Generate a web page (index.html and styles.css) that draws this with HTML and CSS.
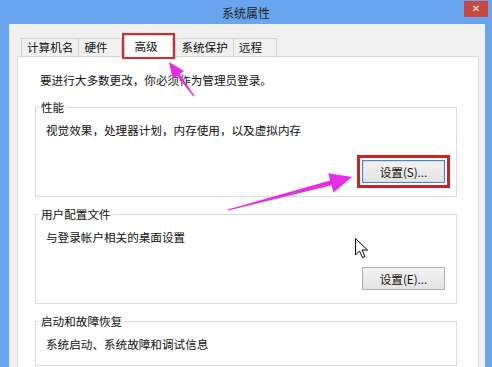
FILE: index.html
```html
<!DOCTYPE html>
<html lang="zh-CN">
<head>
<meta charset="utf-8">
<title>系统属性</title>
<link rel="stylesheet" href="styles.css">
</head>
<body>
<div class="window">
  <header class="titlebar">
    <span></span>
    <span class="title">系统属性</span>
    <span class="close">✕</span>
  </header>
  <div class="panel">
    <nav class="tabs">
      <span class="tab">计算机名</span>
      <span class="tab">硬件</span>
      <span class="tab active">高级</span>
      <span class="tab">系统保护</span>
      <span class="tab">远程</span>
    </nav>
    <section class="pane">
      <p class="intro">要进行大多数更改，你必须作为管理员登录。</p>
      <fieldset class="group">
        <legend>性能</legend>
        <p>视觉效果，处理器计划，内存使用，以及虚拟内存</p>
        <div class="actions"><button class="btn btn-default">设置(S)...</button></div>
      </fieldset>
      <fieldset class="group">
        <legend>用户配置文件</legend>
        <p>与登录帐户相关的桌面设置</p>
        <div class="actions"><button class="btn">设置(E)...</button></div>
      </fieldset>
      <fieldset class="group">
        <legend>启动和故障恢复</legend>
        <p>系统启动、系统故障和调试信息</p>
      </fieldset>
    </section>
  </div>
  <svg class="overlay" width="492" height="367" viewBox="0 0 492 367">
    <polygon class="arrow" points="169,62 184.1,70.9 179.6,74.1 194.6,96 193.4,96.6 177.2,75.9 172.7,79.1"/>
    <polygon class="arrow" points="352,177 333.4,192.4 331.5,185.2 228.2,210.6 227.8,209.4 330.1,180.4 328.2,173.2"/>
    <path class="cursor" d="M355.5 238.5 L355.5 255 L359.5 251 L362.5 257.5 L365 256.5 L362 250 L367.5 250 Z"/>
  </svg>
</div>
</body>
</html>
```

FILE: styles.css
```css
html, body {
  margin: 0;
  padding: 0;
}

body {
  width: 492px;
  height: 367px;
  overflow: hidden;
  background: #69a4ee;
  font-family: "Noto Sans CJK SC", "Microsoft YaHei", sans-serif;
  font-size: 11.6px;
  color: #111;
}

.window {
  position: relative;
  width: 492px;
  height: 367px;
}

.titlebar {
  height: 24px;
  display: grid;
  grid-template-columns: 1fr auto 1fr;
  align-items: center;
}

.title {
  font-size: 12px;
  color: #222;
  line-height: 16px;
  padding-top: 1px;
}

.close {
  justify-self: end;
  align-self: start;
  margin-top: 1px;
  margin-right: 4px;
  width: 24px;
  height: 16px;
  background: #c9483f;
  color: #fff;
  font-family: "DejaVu Sans", sans-serif;
  font-size: 10px;
  font-weight: bold;
  line-height: 16px;
  text-align: center;
}

.panel {
  margin: 0 7px 0 9px;
  height: 343px;
  background: #f0f0f0;
  padding: 11px 6px 0 8px;
  box-sizing: border-box;
}

.tabs {
  display: flex;
  align-items: flex-end;
  padding-left: 4px;
  height: 22px;
}

.tab {
  box-sizing: border-box;
  height: 19px;
  min-width: 44px;
  padding: 0 5px;
  border: 1px solid #d3d3d3;
  background: #f0f0f0;
  margin-left: -1px;
  line-height: 17px;
  white-space: nowrap;
  color: #111;
}

.tab:first-child {
  margin-left: 0;
}

.tab.active {
  position: relative;
  z-index: 1;
  height: 22px;
  min-width: 49px;
  padding: 0 5px 0 9px;
  margin-left: 2px;
  margin-right: 2px;
  background: #fff;
  border-bottom-color: #fff;
  line-height: 20px;
  outline: 2px solid #e0262b;
}

.tab.active + .tab {
  margin-left: 0;
}

.pane {
  margin-top: -1px;
  height: 320px;
  box-sizing: border-box;
  background: #fff;
  border: 1px solid #d9d9d9;
  padding-top: 15px;
}

.intro {
  margin: 0 0 12px 22px;
  line-height: 16px;
}

.group {
  margin: 0 21px 10px 17px;
  padding: 8px 11px 13px 10px;
  border: 1px solid #dcdcdc;
  min-width: 0;
}

.group legend {
  margin-left: -7px;
  padding: 0 2px;
  line-height: 14px;
  color: #111;
}

.group p {
  margin: 0;
  line-height: 16px;
}

.actions {
  display: flex;
  justify-content: flex-end;
  margin-top: 22px;
}

.btn {
  box-sizing: border-box;
  width: 83px;
  height: 23px;
  padding: 0;
  border: 1px solid #adadad;
  background: linear-gradient(#f2f2f2, #e3e3e3);
  font-family: inherit;
  font-size: 11.6px;
  color: #111;
}

.btn-default {
  border-color: #4a87c2;
  box-shadow: inset 0 0 0 1px #cfe2f5;
  outline: 3px solid #d81d22;
  outline-offset: 2px;
}

.overlay {
  position: absolute;
  left: 0;
  top: 0;
  pointer-events: none;
}

.arrow {
  fill: #e52de5;
}

.cursor {
  fill: #fff;
  stroke: #000;
  stroke-width: 1;
  stroke-linejoin: miter;
}
```
